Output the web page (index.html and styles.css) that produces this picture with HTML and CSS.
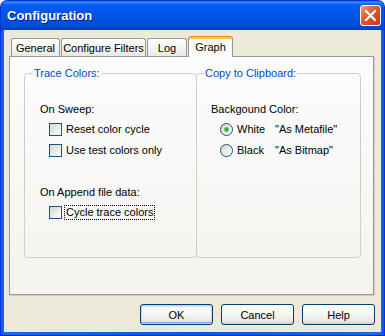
FILE: index.html
```html
<!DOCTYPE html>
<html lang="en">
<head>
    <meta charset="UTF-8">
    <title>Configuration</title>
    <link rel="stylesheet" href="styles.css">
</head>
<body>
    <div class="window">
        <div class="titlebar">
            <span class="title">Configuration</span>
            <button class="close" title="Close">
                <svg width="19" height="19" viewBox="0 0 19 19">
                    <path d="M5 5 L14 14 M14 5 L5 14" stroke="#fff" stroke-width="2.2" stroke-linecap="square"/>
                </svg>
            </button>
        </div>
        <div class="client">
            <div class="tabstrip">
                <div class="tab tab-general">General</div>
                <div class="tab tab-filters">Configure Filters</div>
                <div class="tab tab-log">Log</div>
                <div class="tab tab-graph active">Graph</div>
            </div>
            <div class="page">
                <fieldset class="group group-left">
                    <legend>Trace Colors:</legend>
                    <div class="group-body">
                        <div class="caption">On Sweep:</div>
                        <div class="opt first">
                            <span class="check"></span>
                            <span class="opt-text">Reset color cycle</span>
                        </div>
                        <div class="opt">
                            <span class="check"></span>
                            <span class="opt-text">Use test colors only</span>
                        </div>
                        <div class="caption append">On Append file data:</div>
                        <div class="opt first">
                            <span class="check"></span>
                            <span class="opt-text focus">Cycle trace colors</span>
                        </div>
                    </div>
                </fieldset>
                <fieldset class="group group-right">
                    <legend>Copy to Clipboard:</legend>
                    <div class="group-body">
                        <div class="caption">Backgound Color:</div>
                        <div class="opt first">
                            <span class="radio checked"></span>
                            <span class="opt-text"><span class="name">White</span>"As Metafile"</span>
                        </div>
                        <div class="opt">
                            <span class="radio"></span>
                            <span class="opt-text"><span class="name">Black</span>"As Bitmap"</span>
                        </div>
                    </div>
                </fieldset>
            </div>
            <div class="buttons">
                <button class="btn default">OK</button>
                <button class="btn">Cancel</button>
                <button class="btn">Help</button>
            </div>
        </div>
    </div>
</body>
</html>
```

FILE: styles.css
```css
* {
    box-sizing: border-box;
}
body {
    margin: 0;
    background-color: #fff;
    font-family: "Liberation Sans", Arial, sans-serif;
    font-size: 11px;
    color: #000;
}
.window {
    width: 385px;
    height: 336px;
    display: flex;
    flex-direction: column;
    border: 1px solid #0831D9;
    border-bottom-color: #001EA0;
    border-radius: 7px 7px 0 0;
    background: linear-gradient(to right, #0855DD, #166AEE 3px, #0058EE 50%, #166AEE calc(100% - 3px), #0855DD);
    overflow: hidden;
}
.titlebar {
    height: 29px;
    flex: none;
    display: flex;
    align-items: center;
    justify-content: space-between;
    padding: 0 3px 0 6px;
    background: linear-gradient(to bottom, #0A5FE8 0, #3D95FF 1px, #0A66F3 3px, #0058EE 6px, #0055E5 14px, #0050DD 22px, #0045CF 27px, #003DC0 29px);
}
.title {
    color: #fff;
    font-weight: bold;
    font-size: 13px;
    line-height: 16px;
    text-shadow: 1px 1px 0 #0A1883;
}
.close {
    width: 21px;
    height: 21px;
    padding: 0;
    border: 1px solid #fff;
    border-radius: 3px;
    background: linear-gradient(135deg, #EE9A7E, #D9572F 45%, #C23D1C);
    display: flex;
    align-items: center;
    justify-content: center;
}
.client {
    flex: 1;
    margin: 0 3px 3px;
    background-color: #ECE9D8;
    padding: 6px 7px 7px 5px;
    display: flex;
    flex-direction: column;
}
.tabstrip {
    height: 20px;
    display: flex;
    align-items: flex-end;
    padding-left: 2px;
}
.tab {
    height: 18px;
    margin-right: 1px;
    padding-top: 3px;
    border: 1px solid #919B9C;
    border-bottom: none;
    border-radius: 3px 3px 0 0;
    background: linear-gradient(to bottom, #FFFFFF, #F3F2EE 60%, #E9E8E2);
    text-align: center;
    line-height: 13px;
}
.tab-general { width: 49px; }
.tab-filters { width: 85px; }
.tab-log { width: 40px; }
.tab-graph { width: 45px; }
.tab.active {
    height: 21px;
    margin-bottom: -1px;
    padding-top: 4px;
    position: relative;
    z-index: 1;
    border-top-color: #E68B2C;
    background: #FCFCFE;
    box-shadow: inset 0 2px 0 #FFC83C;
}
.page {
    height: 239px;
    border: 1px solid #919B9C;
    background: linear-gradient(to bottom, #FCFCFE, #F4F3EE);
    box-shadow: 1px 1px 0 #D0CEC2;
    padding: 10px 12px 0 14px;
    display: flex;
    align-items: flex-start;
}
.group {
    margin: 0;
    height: 191px;
    padding: 0 8px;
    border: 1px solid #D0D0BF;
    border-radius: 4px;
    min-width: 0;
}
.group-left {
    width: 173px;
}
.group-right {
    width: 165px;
    margin-left: -1px;
}
.group legend {
    padding: 0 1px;
    color: #0046D5;
    line-height: 13px;
}
.group-right legend {
    margin-left: -1px;
}
.group-body {
    padding: 23px 0 0 7px;
}
.group-right .group-body {
    padding-left: 6px;
}
.caption {
    line-height: 13px;
}
.caption.append {
    margin-top: 25px;
}
.opt {
    height: 21px;
    margin-left: 9px;
    display: flex;
    align-items: center;
}
.opt.first {
    margin-top: 3px;
}
.check {
    width: 13px;
    height: 13px;
    margin-right: 2px;
    border: 1px solid #1C5180;
    background: linear-gradient(135deg, #D8D8D2, #F2F2EE 70%, #FFFFFF);
}
.radio {
    width: 13px;
    height: 13px;
    margin-right: 2px;
    border: 1px solid #1C5180;
    border-radius: 50%;
    background: linear-gradient(135deg, #D8D8D2, #F2F2EE 70%, #FFFFFF);
}
.radio.checked {
    background: radial-gradient(circle at center, #1FA51F 0, #3DC23D 1.5px, #8ED88E 2.5px, transparent 3px),
                linear-gradient(135deg, #D8D8D2, #F2F2EE 70%, #FFFFFF);
}
.opt-text {
    border: 1px solid transparent;
    padding: 0 1px;
    line-height: 13px;
}
.opt-text.focus {
    border: 1px dotted #000;
}
.name {
    display: inline-block;
    width: 38px;
}
.buttons {
    display: flex;
    justify-content: flex-end;
    gap: 8px;
    margin-top: 9px;
    margin-right: -1px;
}
.btn {
    width: 73px;
    height: 21px;
    padding: 0;
    border: 1px solid #003C74;
    border-radius: 3px;
    background: linear-gradient(to bottom, #FFFFFF, #F4F4F0 55%, #E8E6DE 85%, #D6D0C5);
    font-family: "Liberation Sans", Arial, sans-serif;
    font-size: 11px;
    color: #000;
}
.btn.default {
    box-shadow: inset 0 0 0 1px #C0D8F8, inset 0 -2px 0 0 #7FA2E6, inset 0 2px 0 0 #CEE7FF;
}
```
